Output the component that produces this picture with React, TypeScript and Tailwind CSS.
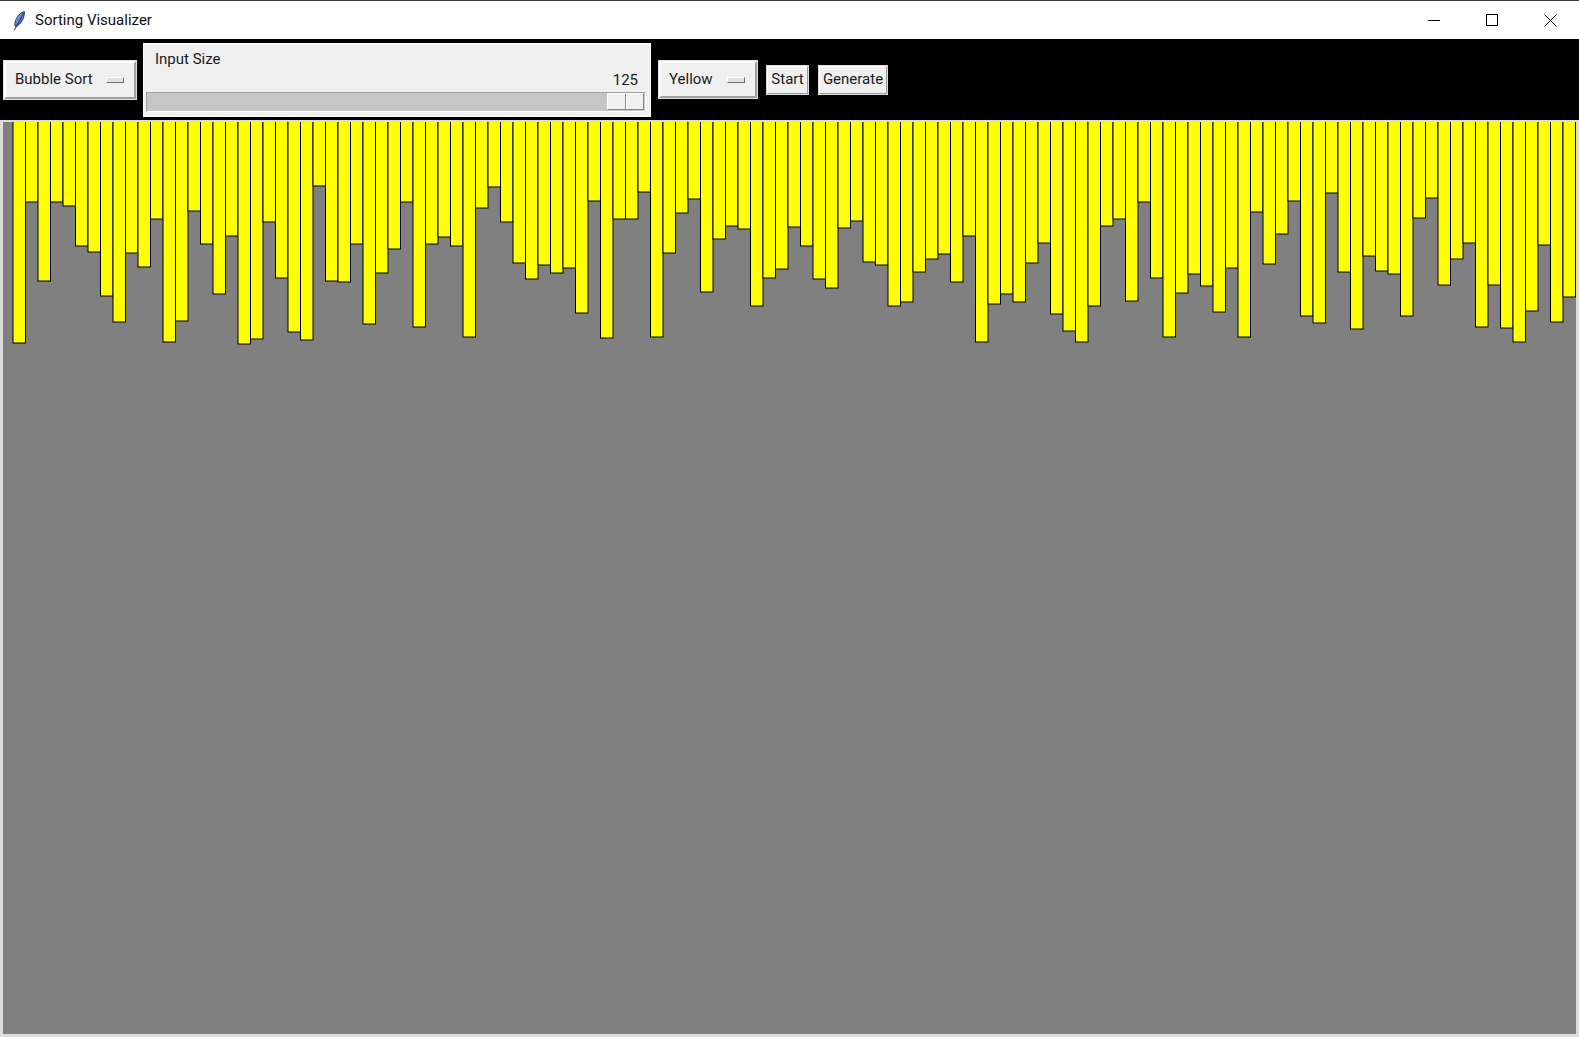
import { ReactNode } from 'react';

// bar heights read off the canvas, left to right
const heights = [
  221, 80, 159, 80, 84, 124, 130, 174, 200, 131, 145, 97, 220, 199, 89, 122, 172, 114, 222, 217,
  100, 156, 210, 218, 64, 159, 160, 122, 202, 151, 127,
  80, 205, 122, 115, 124, 215, 86, 65, 100, 141, 157, 143, 151, 146, 191, 79, 216, 97, 97, 70,
  215, 131, 91, 77, 170, 117, 104, 107, 184, 156, 147, 105,
  124, 157, 166, 106, 99, 140, 143, 184, 180, 150, 137, 132, 160, 114, 220, 182, 172, 180, 141, 121,
  192, 209, 220, 184, 104, 97, 179, 80, 156, 215, 171, 152,
  164, 190, 146, 215, 90, 142, 112, 79, 194, 201, 71, 150, 207, 134, 149, 152, 194, 96, 76, 163,
  137, 121, 205, 163, 206, 220, 189, 123, 200, 175,
];

function Feather() {
  return (
    <svg width="12" height="20" viewBox="0 0 12 20">
      <defs>
        <linearGradient id="fg" x1="0" y1="0" x2="1" y2="1">
          <stop offset="0" stopColor="#9cc0f5" />
          <stop offset="1" stopColor="#2a4fa0" />
        </linearGradient>
      </defs>
      <path d="M11.5 0.6 C6.5 1.6 1.6 7.4 1.8 14.8 L3.2 15.6 C8.2 13 11.4 7.4 11.5 0.6 Z" fill="url(#fg)" stroke="#1d2f5e" strokeWidth="0.9" />
      <path d="M10.6 2 L1.2 19.4" stroke="#1d2f5e" strokeWidth="1" />
    </svg>
  );
}

function Raised({ children, className = '' }: { children: ReactNode; className?: string }) {
  return (
    <div className={`border border-[#e1e1e1] ${className}`}>
      <div className="flex h-full w-full items-center border-2 border-t-white border-l-white border-r-[#a0a0a0] border-b-[#a0a0a0] bg-[#f0f0f0]">
        {children}
      </div>
    </div>
  );
}

function Indicator({ w }: { w: string }) {
  return <div className={`${w} h-[6px] border border-t-white border-l-white border-r-[#6d6d6d] border-b-[#6d6d6d] bg-[#e3e3e3]`} />;
}

function OptionMenu({ label, className, pad }: { label: string; className: string; pad: string }) {
  return (
    <Raised className={className}>
      <span className={`${pad} text-[#1a1a1a]`}>{label}</span>
      <div className="ml-auto mr-[10px]">
        <Indicator w="w-[18px]" />
      </div>
    </Raised>
  );
}

function Button({ label, className }: { label: string; className: string }) {
  return (
    <div className={`border border-[#dcdcdc] ${className}`}>
      <div className="flex h-full w-full items-center justify-center border border-t-white border-l-white border-r-[#9a9a9a] border-b-[#9a9a9a] bg-[#f0f0f0] text-[#1a1a1a]">
        {label}
      </div>
    </div>
  );
}

function InputSize() {
  return (
    <div className="ml-[6px] flex h-[74px] w-[508px] flex-col border border-white bg-[#f0f0f0]">
      <span className="ml-[11px] mt-[5px] leading-[20px] text-[#1a1a1a]">Input Size</span>
      <span className="mr-[12px] mt-[1px] self-end leading-[20px] text-[#1a1a1a]">125</span>
      <div className="ml-[2px] mr-[4px] mt-[2px] flex h-[20px] items-center justify-end border border-t-[#a0a0a0] border-l-[#a0a0a0] border-r-white border-b-white bg-[#c6c6c6] pr-px">
        <div className="flex h-[17px] w-[37px] border border-t-white border-l-white border-r-[#8a8a8a] border-b-[#8a8a8a] bg-[#f0f0f0]">
          <div className="h-full w-[18px] border-r border-[#8a8a8a]" />
          <div className="h-full flex-1 border-l border-white" />
        </div>
      </div>
    </div>
  );
}

export default function App() {
  return (
    <div className="flex h-[1037px] w-[1579px] flex-col overflow-hidden bg-white font-['Roboto',sans-serif] text-[15px]">
      <div className="flex h-[39px] items-center border-t border-[#3a3a3a] bg-white">
        <div className="ml-[13px] mt-[1px]">
          <Feather />
        </div>
        <span className="ml-[10px] text-[#111]">Sorting Visualizer</span>
        <div className="ml-auto flex h-full">
          <div className="flex w-[58px] items-center justify-center">
            <div className="h-px w-[12px] bg-black" />
          </div>
          <div className="flex w-[58px] items-center justify-center">
            <div className="h-[12px] w-[12px] border border-black" />
          </div>
          <div className="flex w-[58px] items-center justify-center">
            <svg width="13" height="13" viewBox="0 0 13 13">
              <path d="M0.5 0.5 L12.5 12.5 M12.5 0.5 L0.5 12.5" stroke="#000" strokeWidth="1" />
            </svg>
          </div>
        </div>
      </div>

      <div className="flex h-[81px] items-center bg-black pl-[3px]">
        <OptionMenu label="Bubble Sort" className="h-[40px] w-[134px]" pad="pl-[9px]" />
        <InputSize />
        <OptionMenu label="Yellow" className="ml-[7px] h-[39px] w-[100px]" pad="pl-[8px]" />
        <Button label="Start" className="ml-[8px] h-[30px] w-[43px]" />
        <Button label="Generate" className="ml-[9px] h-[30px] w-[70px]" />
      </div>

      <div className="flex-1 overflow-hidden border-x-[3px] border-t-2 border-b-[3px] border-[#dcdcdc] bg-[#808080]">
        <svg width="1573" height="240" className="block">
          {heights.map((h, i) => (
            <rect
              key={i}
              x={10 + 12.5 * i}
              y={-2}
              width={12.5}
              height={h + 2}
              fill="#ffff00"
              stroke="#000"
              strokeWidth={1}
            />
          ))}
        </svg>
      </div>
    </div>
  );
}
